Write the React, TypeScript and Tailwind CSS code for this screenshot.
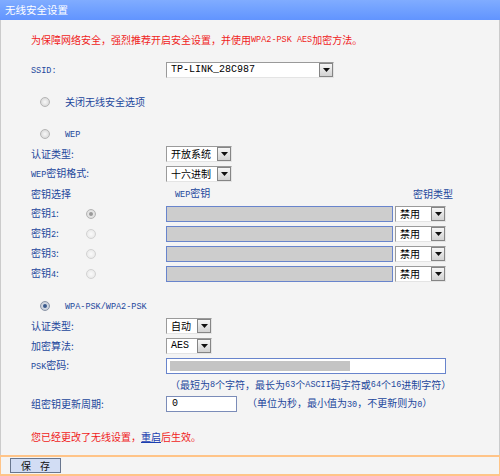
import React from "react";

const CN = "font-['Noto_Sans_CJK_SC','Noto_Sans',sans-serif]";

function En({ children }: { children: React.ReactNode }) {
    return <span className="font-['Liberation_Mono',monospace] text-[8.5px]">{children}</span>;
}

function Arrow() {
    return (
        <span className="w-[14px] h-[14px] shrink-0 border border-[#858585] bg-gradient-to-b from-[#f6f6f6] to-[#d2d2d2] flex items-center justify-center">
            <svg width="7" height="4" viewBox="0 0 7 4">
                <path d="M0 0h7L3.5 4z" fill="#111" />
            </svg>
        </span>
    );
}

type SelectProps = {
    value: string;
    width: string;
    mono?: boolean;
};

function Select({ value, width, mono }: SelectProps) {
    return (
        <div className={`${width} h-[16px] flex items-center bg-white border border-t-[#9a9a9a] border-l-[#9a9a9a] border-r-[#e4e4e4] border-b-[#e4e4e4] pl-[4px]`}>
            <span className={`flex-1 text-black ${mono ? "font-['Liberation_Mono',monospace] text-[10px]" : "text-[10px]"}`}>
                {value}
            </span>
            <Arrow />
        </div>
    );
}

type RadioProps = { kind: "off" | "dim" | "grayOn" | "blueOn" };

function Radio({ kind }: RadioProps) {
    if (kind === "blueOn") {
        return (
            <span className="w-[10px] h-[10px] rounded-full border border-[#8a94a6] bg-[radial-gradient(circle,#e8ecf4,#b8c0cc)] flex items-center justify-center">
                <span className="w-[4px] h-[4px] rounded-full bg-[#3a5a8c]" />
            </span>
        );
    }
    if (kind === "grayOn") {
        return (
            <span className="w-[10px] h-[10px] rounded-full border border-[#b4b4b4] bg-[radial-gradient(circle,#f4f4f4,#d4d4d4)] flex items-center justify-center">
                <span className="w-[4px] h-[4px] rounded-full bg-[#9a9a9a]" />
            </span>
        );
    }
    if (kind === "dim") {
        return <span className="w-[10px] h-[10px] rounded-full border border-[#d2d2d2] bg-[radial-gradient(circle,#fafafa,#e4e4e4)]" />;
    }
    return <span className="w-[10px] h-[10px] rounded-full border border-[#b4b4b4] bg-[radial-gradient(circle,#f8f8f8,#d0d0d0)]" />;
}

function Row({ label, children }: { label: React.ReactNode; children?: React.ReactNode }) {
    return (
        <div className="h-[20px] flex items-center">
            <div className="w-[135px] shrink-0 text-[#23479c]">{label}</div>
            {children}
        </div>
    );
}

function KeyRow({ n, first }: { n: number; first?: boolean }) {
    return (
        <div className="h-[20px] flex items-center">
            <div className="w-[135px] shrink-0 flex items-center text-[#23479c]">
                <span className="w-[55px]">
                    密钥<En>{n}</En>:
                </span>
                <Radio kind={first ? "grayOn" : "dim"} />
            </div>
            <div className="w-[227px] h-[16px] border border-[#6884cc] bg-[#cdcdcd]" />
            <div className="ml-[2px]">
                <Select value="禁用" width="w-[51px]" />
            </div>
        </div>
    );
}

export default function App() {
    return (
        <div className={`w-[500px] h-[476px] bg-[#f4f4f4] flex flex-col text-[10px] leading-none ${CN}`}>
            <div className="h-[20px] shrink-0 bg-gradient-to-b from-[#80acff] to-[#6194ff] text-white flex items-center pl-[5px] text-[10.5px]">
                无线安全设置
            </div>
            <div className="flex-1 border-x border-[#cbcbcb] pl-[30px] pt-[10px]">
                <div className="h-[20px] flex items-center text-[#f01c1c]">
                    为保障网络安全，强烈推荐开启安全设置，并使用<En>WPA2-PSK AES</En>加密方法。
                </div>

                <div className="mt-[10px]">
                    <Row label={<En>SSID:</En>}>
                        <Select value="TP-LINK_28C987" width="w-[168px]" mono />
                    </Row>
                </div>

                <div className="mt-[12px] h-[20px] flex items-center pl-[9px]">
                    <Radio kind="off" />
                    <span className="ml-[15px] text-[#23479c]">关闭无线安全选项</span>
                </div>

                <div className="mt-[12px] h-[20px] flex items-center pl-[9px]">
                    <Radio kind="off" />
                    <span className="ml-[15px] text-[#23479c]">
                        <En>WEP</En>
                    </span>
                </div>
                <Row label="认证类型:">
                    <Select value="开放系统" width="w-[66px]" />
                </Row>
                <Row label={<><En>WEP</En>密钥格式:</>}>
                    <Select value="十六进制" width="w-[66px]" />
                </Row>
                <div className="h-[20px] flex items-center text-[#23479c]">
                    <span className="w-[144px] shrink-0">密钥选择</span>
                    <span className="w-[238px] shrink-0">
                        <En>WEP</En>密钥
                    </span>
                    <span>密钥类型</span>
                </div>
                <KeyRow n={1} first />
                <KeyRow n={2} />
                <KeyRow n={3} />
                <KeyRow n={4} />

                <div className="mt-[12px] h-[20px] flex items-center pl-[9px]">
                    <Radio kind="blueOn" />
                    <span className="ml-[15px] text-[#23479c]">
                        <En>WPA-PSK/WPA2-PSK</En>
                    </span>
                </div>
                <Row label="认证类型:">
                    <Select value="自动" width="w-[46px]" />
                </Row>
                <Row label="加密算法:">
                    <Select value="AES" width="w-[46px]" mono />
                </Row>
                <Row label={<><En>PSK</En>密码:</>}>
                    <div className="w-[280px] h-[16px] border border-[#6884cc] bg-white flex items-center pl-[3px]">
                        <div className="w-[180px] h-[10px] bg-[#c4c4c4]" />
                    </div>
                </Row>
                <div className="h-[18px] flex items-center pl-[139px] text-[#23479c]">
                    （最短为<En>8</En>个字符，最长为<En>63</En>个<En>ASCII</En>码字符或<En>64</En>个<En>16</En>进制字符）
                </div>
                <Row label="组密钥更新周期:">
                    <div className="w-[71px] h-[16px] border border-[#7b8cb8] bg-white flex items-center pl-[5px] font-['Liberation_Mono',monospace] text-[10px] text-black">
                        0
                    </div>
                    <span className="ml-[10px] text-[#23479c]">
                        （单位为秒，最小值为<En>30</En>，不更新则为<En>0</En>）
                    </span>
                </Row>

                <div className="mt-[13px] h-[20px] flex items-center text-[#f01c1c]">
                    您已经更改了无线设置，
                    <span className="text-[#1c3fb0] underline">重启</span>
                    后生效。
                </div>
            </div>
            <div className="h-[21px] shrink-0 border-x border-y-2 border-[#ffc488] flex items-center pl-[9px]">
                <button className="w-[51px] h-[15px] border border-[#68768e] bg-[#d2ddf4] text-[10px] text-[#111] flex items-center justify-center gap-[9px]">
                    <span>保</span>
                    <span>存</span>
                </button>
            </div>
        </div>
    );
}
